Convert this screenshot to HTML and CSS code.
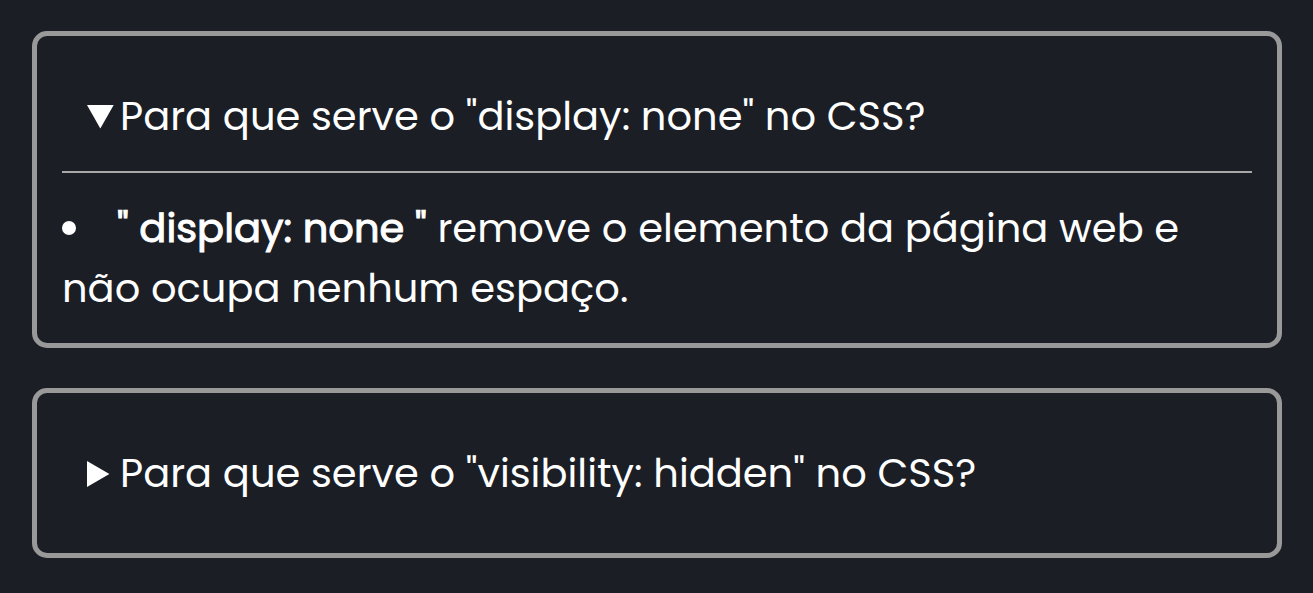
FILE: index.html
```html
<!DOCTYPE html>
<html lang="pt-BR">
<head>
<meta charset="utf-8">
<title>Perguntas sobre CSS</title>
<link rel="stylesheet" href="styles.css">
</head>
<body>
<main class="faq">
  <details class="card" open>
    <summary class="question"><svg class="marker" viewBox="0 0 28 28" aria-hidden="true"><path d="M0 3H26.7L13.3 26.5Z"/></svg><span>Para que serve o "display: none" no CSS?</span></summary>
    <ul class="answer">
      <li><strong class="term">" display: none "</strong> remove o elemento da página web e não ocupa nenhum espaço.</li>
    </ul>
  </details>
  <details class="card">
    <summary class="question"><svg class="marker" viewBox="0 0 28 28" aria-hidden="true"><path d="M0 2V28L22.4 15Z"/></svg><span>Para que serve o "visibility: hidden" no CSS?</span></summary>
  </details>
</main>
</body>
</html>
```

FILE: styles.css
```css
* {
  box-sizing: border-box;
}

body {
  margin: 0;
  background: #1b1e25;
  color: #fff;
  font-family: Poppins, Inter, sans-serif;
  font-size: 40px;
  line-height: 60px;
}

.faq {
  display: flex;
  flex-direction: column;
  gap: 40px;
  padding: 31px 31px 31px 32px;
}

.card {
  padding: 25px;
  border: 5px solid #999;
  border-radius: 15px;
}

.question {
  display: flex;
  align-items: center;
  gap: 5px;
  padding: 25px;
  list-style: none;
  cursor: pointer;
}

.marker {
  flex: none;
  width: 28px;
  height: 28px;
  fill: #fff;
}

.answer {
  margin: 0;
  padding: 25px 0 0;
  border-top: 2px solid #a8a6a6;
  list-style: disc inside;
}

.term {
  font-weight: 400;
  -webkit-text-stroke: 1px #fff;
}
```
